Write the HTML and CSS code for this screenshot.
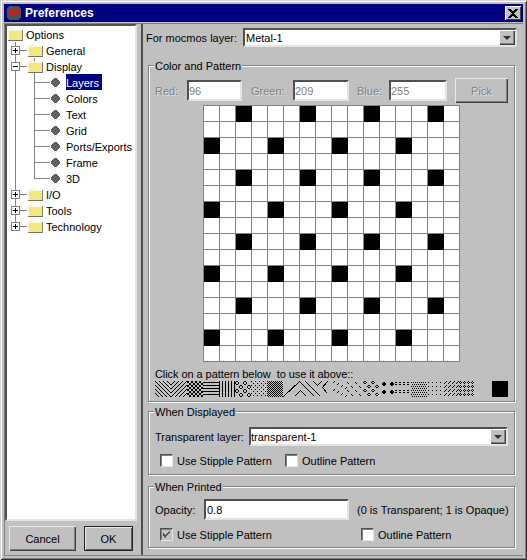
FILE: index.html
```html
<!DOCTYPE html>
<html lang="en">
<head>
<meta charset="utf-8">
<title>Preferences</title>
<link rel="stylesheet" href="styles.css">
</head>
<body>
<svg class="defs" width="0" height="0" aria-hidden="true">
  <symbol id="folder" viewBox="0 0 16 14">
    <path d="M1 2h1V1h5v1h1v1h7v10H1z" fill="#f4e87c"/>
    <path d="M1 3V2h1V1h5v1h1v1h7v1H2v9H1z" fill="#fbf8d8"/>
    <path d="M15 3h1v11H1v-1h14z" fill="#808080"/>
    <path d="M2 13h13v1H2z" fill="#707070"/>
  </symbol>
  <symbol id="ball" viewBox="0 0 9 9">
    <path d="M3 0h3v1h1v1h1v1h1v3H8v1H7v1H6v1H3V8H2V7H1V6H0V3h1V2h1V1h1z" fill="#606060"/>
  </symbol>
</svg>
<div class="window">
  <header class="titlebar">
    <svg class="appicon" width="14" height="14" viewBox="0 0 14 14" shape-rendering="crispEdges">
      <path d="M2 0h10v1h1v1h1v10h-1v1h-1v1H2v-1H1v-1H0V2h1V1h1z" fill="#505050"/>
      <path d="M2 3h4v4H2zM8 3h4v4H8zM5 7h4v3H5z" fill="#f01010"/>
    </svg>
    <span class="title-text">Preferences</span>
    <button class="closebtn" type="button" aria-label="Close">
      <svg width="10" height="9" viewBox="0 0 10 9" shape-rendering="crispEdges"><path d="M0 0h2.500l2.500 3 2.500-3H10L6.200 4.500 10 9H7.500L5 6 2.500 9H0l3.800-4.500z" fill="#000"/></svg>
    </button>
  </header>
  <div class="split">
    <aside class="leftpane">
      <div class="tree">
        <svg class="treelines" width="60" height="210" shape-rendering="crispEdges"><path d="M8.500 16V197M8.500 24.500H20M8.500 40.500H20M8.500 168.500H20M8.500 184.500H20M8.500 200.500H20M27.500 32V152.500M27.500 56.500H43M27.500 72.500H43M27.500 88.500H43M27.500 104.500H43M27.500 120.500H43M27.500 136.500H43M27.500 152.500H43" fill="none" stroke="#808080"/></svg>
        <div class="node"><svg class="folder"><use href="#folder"/></svg><span>Options</span></div>
        <div class="node l1"><span class="exp plus"></span><svg class="folder"><use href="#folder"/></svg><span>General</span></div>
        <div class="node l1"><span class="exp"></span><svg class="folder"><use href="#folder"/></svg><span>Display</span></div>
        <div class="node l2"><svg class="ball"><use href="#ball"/></svg><span class="sel">Layers</span></div>
        <div class="node l2"><svg class="ball"><use href="#ball"/></svg><span>Colors</span></div>
        <div class="node l2"><svg class="ball"><use href="#ball"/></svg><span>Text</span></div>
        <div class="node l2"><svg class="ball"><use href="#ball"/></svg><span>Grid</span></div>
        <div class="node l2"><svg class="ball"><use href="#ball"/></svg><span>Ports/Exports</span></div>
        <div class="node l2"><svg class="ball"><use href="#ball"/></svg><span>Frame</span></div>
        <div class="node l2"><svg class="ball"><use href="#ball"/></svg><span>3D</span></div>
        <div class="node l1"><span class="exp plus"></span><svg class="folder"><use href="#folder"/></svg><span>I/O</span></div>
        <div class="node l1"><span class="exp plus"></span><svg class="folder"><use href="#folder"/></svg><span>Tools</span></div>
        <div class="node l1"><span class="exp plus"></span><svg class="folder"><use href="#folder"/></svg><span>Technology</span></div>
      </div>
      <div class="actions">
        <button class="btn btn-cancel" type="button">Cancel</button>
        <button class="btn btn-ok" type="button">OK</button>
      </div>
    </aside>
    <main class="rightpane">
      <div class="layer-row">
        <span class="lbl lbl-layer">For mocmos layer:</span>
        <div class="combo combo-layer"><span class="combo-text">Metal-1</span><span class="combo-btn"><i class="arrow"></i></span></div>
      </div>

      <section class="group group-color">
        <h2 class="legend">Color and Pattern</h2>
        <div class="rgb-row">
          <span class="lbl dis lbl-red">Red:</span><span class="field f-red">96</span>
          <span class="lbl dis lbl-green">Green:</span><span class="field f-green">209</span>
          <span class="lbl dis lbl-blue">Blue:</span><span class="field f-blue">255</span>
          <button class="btn btn-pick" type="button">Pick</button>
        </div>
        <div class="pgrid">
          <i></i><i></i><i class="k"></i><i></i><i></i><i></i><i class="k"></i><i></i><i></i><i></i><i class="k"></i><i></i><i></i><i></i><i class="k"></i><i></i>
          <i></i><i></i><i></i><i></i><i></i><i></i><i></i><i></i><i></i><i></i><i></i><i></i><i></i><i></i><i></i><i></i>
          <i class="k"></i><i></i><i></i><i></i><i class="k"></i><i></i><i></i><i></i><i class="k"></i><i></i><i></i><i></i><i class="k"></i><i></i><i></i><i></i>
          <i></i><i></i><i></i><i></i><i></i><i></i><i></i><i></i><i></i><i></i><i></i><i></i><i></i><i></i><i></i><i></i>
          <i></i><i></i><i class="k"></i><i></i><i></i><i></i><i class="k"></i><i></i><i></i><i></i><i class="k"></i><i></i><i></i><i></i><i class="k"></i><i></i>
          <i></i><i></i><i></i><i></i><i></i><i></i><i></i><i></i><i></i><i></i><i></i><i></i><i></i><i></i><i></i><i></i>
          <i class="k"></i><i></i><i></i><i></i><i class="k"></i><i></i><i></i><i></i><i class="k"></i><i></i><i></i><i></i><i class="k"></i><i></i><i></i><i></i>
          <i></i><i></i><i></i><i></i><i></i><i></i><i></i><i></i><i></i><i></i><i></i><i></i><i></i><i></i><i></i><i></i>
          <i></i><i></i><i class="k"></i><i></i><i></i><i></i><i class="k"></i><i></i><i></i><i></i><i class="k"></i><i></i><i></i><i></i><i class="k"></i><i></i>
          <i></i><i></i><i></i><i></i><i></i><i></i><i></i><i></i><i></i><i></i><i></i><i></i><i></i><i></i><i></i><i></i>
          <i class="k"></i><i></i><i></i><i></i><i class="k"></i><i></i><i></i><i></i><i class="k"></i><i></i><i></i><i></i><i class="k"></i><i></i><i></i><i></i>
          <i></i><i></i><i></i><i></i><i></i><i></i><i></i><i></i><i></i><i></i><i></i><i></i><i></i><i></i><i></i><i></i>
          <i></i><i></i><i class="k"></i><i></i><i></i><i></i><i class="k"></i><i></i><i></i><i></i><i class="k"></i><i></i><i></i><i></i><i class="k"></i><i></i>
          <i></i><i></i><i></i><i></i><i></i><i></i><i></i><i></i><i></i><i></i><i></i><i></i><i></i><i></i><i></i><i></i>
          <i class="k"></i><i></i><i></i><i></i><i class="k"></i><i></i><i></i><i></i><i class="k"></i><i></i><i></i><i></i><i class="k"></i><i></i><i></i><i></i>
          <i></i><i></i><i></i><i></i><i></i><i></i><i></i><i></i><i></i><i></i><i></i><i></i><i></i><i></i><i></i><i></i>
        </div>
        <p class="hint">Click on a pattern below&nbsp; to use it above::</p>
        <div class="strip-row">
          <svg class="strip" width="320" height="16" viewBox="0 0 320 16" shape-rendering="crispEdges">
            <defs>
              <pattern id="p-back" width="4" height="4" patternUnits="userSpaceOnUse"><path d="M0 0h1v1H0zM1 1h1v1H1zM2 2h1v1H2zM3 3h1v1H3z"/></pattern>
              <pattern id="p-fwd" width="4" height="4" patternUnits="userSpaceOnUse"><path d="M3 0h1v1H3zM2 1h1v1H2zM1 2h1v1H1zM0 3h1v1H0z"/></pattern>
              <pattern id="p-check" width="4" height="4" patternUnits="userSpaceOnUse"><path d="M0 0h2v2H0zM2 2h2v2H2z"/></pattern>
              <pattern id="p-horiz" width="3" height="3" patternUnits="userSpaceOnUse"><path d="M0 1h3v1H0z"/></pattern>
              <pattern id="p-vert" width="3" height="3" patternUnits="userSpaceOnUse"><path d="M1 0h1v3H1z"/></pattern>
              <pattern id="p-rings" width="8" height="8" patternUnits="userSpaceOnUse"><path d="M1 0h2v1H1zM0 1h1v2H0zM3 1h1v2H3zM1 3h2v1H1zM5 4h2v1H5zM4 5h1v2H4zM7 5h1v2H7zM5 7h2v1H5z"/></pattern>
              <pattern id="p-sparse" width="4" height="4" patternUnits="userSpaceOnUse"><path d="M0 0h1v1H0zM2 2h1v1H2z"/></pattern>
              <pattern id="p-dense" width="2" height="2" patternUnits="userSpaceOnUse"><path d="M0 0h1v1H0zM1 1h1v1H1z"/></pattern>
              <pattern id="p-dash" width="16" height="8" patternUnits="userSpaceOnUse"><path d="M3 0h1v1H3zM2 1h1v1H2zM7 2h1v1H7zM6 3h1v1H6zM11 4h1v1h-1zM10 5h1v1h-1zM15 6h1v1h-1zM14 7h1v1h-1z"/></pattern>
              <pattern id="p-backdash" width="8" height="8" patternUnits="userSpaceOnUse"><path d="M0 1h1v1H0zM1 2h1v1H1zM4 5h1v1H4zM5 6h1v1H5z"/></pattern>
              <pattern id="p-diamond" width="8" height="8" patternUnits="userSpaceOnUse"><path d="M1 0h2v1H1zM0 1h1v1H0zM3 1h1v1H3zM1 2h2v1H1zM5 4h2v1H5zM4 5h1v1H4zM7 5h1v1H7zM5 6h2v1H5z"/></pattern>
              <pattern id="p-bigdot" width="8" height="8" patternUnits="userSpaceOnUse"><path d="M1 0h2v1h1v2H3v1H1V3H0V1h1z"/></pattern>
              <pattern id="p-bars" width="4" height="8" patternUnits="userSpaceOnUse"><path d="M0 1h2v1H0zM0 3h2v1H0z"/></pattern>
              <pattern id="p-fine" width="4" height="4" patternUnits="userSpaceOnUse"><path d="M0 1h1v1H0zM2 1h1v1H2zM1 3h1v1H1zM3 3h1v1H3z"/></pattern>
              <pattern id="p-grid" width="4" height="4" patternUnits="userSpaceOnUse"><path d="M1 1h1v1H1z"/></pattern>
              <pattern id="p-tick" width="4" height="4" patternUnits="userSpaceOnUse"><path d="M3 0h1v1H3zM2 1h1v1H2zM1 2h1v1H1z"/></pattern>
              <pattern id="p-blocks" width="4" height="4" patternUnits="userSpaceOnUse"><path d="M1 0h1v1H1zM0 1h1v1H0zM2 1h1v1H2zM1 2h1v1H1z"/></pattern>
            </defs>
            <rect x="0" width="16" height="16" fill="url(#p-back)"/>
            <rect x="16" width="16" height="16" fill="url(#p-fwd)"/>
            <rect x="32" width="16" height="16" fill="url(#p-check)"/>
            <rect x="48" width="16" height="16" fill="url(#p-horiz)"/>
            <rect x="64" width="16" height="16" fill="url(#p-vert)"/>
            <rect x="80" width="16" height="16" fill="url(#p-rings)"/>
            <rect x="96" width="16" height="16" fill="url(#p-sparse)"/>
            <rect x="112" width="16" height="16" fill="url(#p-dense)"/>
            <path d="M128.500 15.500L144.500 .5L159.500 15.500M139.500 15.500L145.500 9.500L151.500 15.500M150.500 .5L165.500 15.500M158.500 .5L162.500 4.500L166.500 .5M172.500 .5L167.500 6.500L172.500 12.500" fill="none" stroke="#000"/>
            <rect x="176" width="16" height="16" fill="url(#p-dash)"/>
            <rect x="192" width="16" height="16" fill="url(#p-backdash)"/>
            <rect x="208" width="16" height="16" fill="url(#p-diamond)"/>
            <rect x="224" y="0" width="16" height="16" fill="url(#p-bigdot)" transform="translate(3 1)"/>
            <rect x="240" width="16" height="16" fill="url(#p-bars)"/>
            <rect x="256" width="16" height="16" fill="url(#p-fine)"/>
            <rect x="272" width="16" height="16" fill="url(#p-grid)"/>
            <rect x="288" width="16" height="16" fill="url(#p-tick)"/>
            <rect x="304" width="16" height="16" fill="url(#p-blocks)"/>
          </svg>
          <span class="swatch"></span>
        </div>
      </section>

      <section class="group group-displayed">
        <h2 class="legend">When Displayed</h2>
        <div class="inline-row">
          <span class="lbl lbl-trans">Transparent layer:</span>
          <div class="combo combo-trans"><span class="combo-text flush">transparent-1</span><span class="combo-btn"><i class="arrow"></i></span></div>
        </div>
        <div class="check-row">
          <label class="check w-disp"><span class="box"></span>Use Stipple Pattern</label>
          <label class="check"><span class="box"></span>Outline Pattern</label>
        </div>
      </section>

      <section class="group group-printed">
        <h2 class="legend">When Printed</h2>
        <div class="inline-row">
          <span class="lbl lbl-op">Opacity:</span>
          <span class="field f-op">0.8</span>
          <span class="lbl op-note">(0 is Transparent; 1 is Opaque)</span>
        </div>
        <div class="check-row">
          <label class="check w-print"><span class="box on"><svg width="9" height="9" viewBox="0 0 9 9" shape-rendering="crispEdges"><path d="M8 1v2H7v1H6v1H5v1H4v2H3V7H2V6H1V3h1v1h1v1h1V4h1V3h1V2h1V1z" fill="#505050"/></svg></span>Use Stipple Pattern</label>
          <label class="check"><span class="box"></span>Outline Pattern</label>
        </div>
      </section>
    </main>
  </div>
</div>
</body>
</html>
```
FILE: styles.css
```css
* { box-sizing: border-box; }
html, body { margin: 0; padding: 0; }
body {
  width: 527px;
  height: 560px;
  overflow: hidden;
  background: #c0c0c0;
  font: 11px/13px "Liberation Sans", Arial, sans-serif;
  color: #000;
}
.defs { position: absolute; }

.window {
  width: 527px;
  height: 560px;
  padding: 4px;
  display: flex;
  flex-direction: column;
  background: #c0c0c0;
  box-shadow: inset 1px 1px 0 #d4d4d4, inset -1px -1px 0 #303030, inset 2px 2px 0 #fff, inset -2px -2px 0 #808080;
}

/* Title bar */
.titlebar {
  height: 18px;
  margin-bottom: 1px;
  padding: 0 2px 0 3px;
  flex: none;
  display: flex;
  align-items: center;
  background: #000080;
  color: #fff;
}
.appicon { flex: none; }
.title-text { margin-left: 4px; font-size: 12px; font-weight: 700; }
.closebtn {
  margin-left: auto;
  width: 16px;
  height: 14px;
  padding: 0;
  display: flex;
  align-items: center;
  justify-content: center;
  border: 0;
  background: #c0c0c0;
  box-shadow: inset 1px 1px 0 #fff, inset -1px -1px 0 #404040;
}

/* Split pane */
.split {
  flex: 1;
  min-height: 0;
  display: flex;
  border-top: 1px solid #808080;
  border-left: 1px solid #808080;
  border-bottom: 1px solid #808080;
}
.leftpane { width: 136px; flex: none; display: flex; flex-direction: column; }

/* Tree */
.tree {
  position: relative;
  width: 132px;
  height: 497px;
  background: #fff;
  border: 2px solid;
  border-color: #505050 #e4e4e4 #e4e4e4 #505050;
}
.treelines { position: absolute; left: 0; top: 0; }
.node {
  position: relative;
  height: 16px;
  display: flex;
  align-items: center;
  white-space: nowrap;
}
.node > span { height: 16px; line-height: 18px; }
.node.l1 { padding-left: 4px; }
.node.l2 { padding-left: 44px; }
.folder { width: 16px; height: 14px; flex: none; margin-right: 3px; }
.ball { width: 9px; height: 9px; flex: none; margin-right: 6px; }
.node > .exp {
  position: relative;
  width: 9px;
  height: 9px;
  flex: none;
  margin-right: 7px;
  background: #fff;
  border: 1px solid #808080;
}
.exp::before {
  content: "";
  position: absolute;
  left: 1px;
  top: 3px;
  width: 5px;
  height: 1px;
  background: #000;
}
.exp.plus::after {
  content: "";
  position: absolute;
  left: 3px;
  top: 1px;
  width: 1px;
  height: 5px;
  background: #000;
}
.node > .sel { background: #000080; color: #fff; padding-right: 3px; }

/* Bottom buttons */
.actions { display: flex; padding: 5px 0 0 4px; gap: 8px; }
.btn {
  height: 25px;
  padding: 2px 0 0;
  border: 0;
  font: inherit;
  color: #000;
  background: #c0c0c0;
  box-shadow: inset 1px 1px 0 #e8e8e8, inset -1px -1px 0 #404040, inset -2px -2px 0 #808080;
}
.btn-cancel { width: 67px; }
.btn-ok {
  width: 49px;
  box-shadow: inset 0 0 0 1px #202020, inset 2px 2px 0 #e8e8e8, inset -2px -2px 0 #606060;
}

/* Right pane */
.rightpane {
  flex: 1;
  padding: 4px 6px 0 3px;
  border-left: 2px solid #505050;
}
.layer-row { display: flex; align-items: center; }
.lbl { flex: none; padding-top: 2px; }
.lbl-layer { width: 97px; }
.combo {
  display: flex;
  height: 19px;
  background: #fff;
  border: 2px solid;
  border-color: #505050 #e4e4e4 #e4e4e4 #505050;
}
.combo-layer { width: 274px; }
.combo-trans { width: 259px; }
.combo-text { flex: 1; padding-left: 1px; line-height: 17px; }
.combo-text.flush { padding-left: 0; }
.combo-btn {
  width: 16px;
  flex: none;
  display: flex;
  align-items: center;
  justify-content: center;
  background: #c0c0c0;
  box-shadow: inset 1px 1px 0 #fff, inset -1px -1px 0 #404040, inset -2px -2px 0 #808080;
}
.arrow {
  width: 0;
  height: 0;
  border-left: 4px solid transparent;
  border-right: 4px solid transparent;
  border-top: 4px solid #303030;
}

/* Etched groups */
.group {
  position: relative;
  margin-left: 2px;
  width: 367px;
  padding: 0 0 0 6px;
  border: 1px solid #808080;
  box-shadow: 1px 1px 0 #fff, inset 1px 1px 0 #fff;
}
.legend {
  position: absolute;
  left: 5px;
  top: -6px;
  margin: 0;
  padding: 0 1px;
  font: inherit;
  background: #c0c0c0;
}
.group-color { height: 337px; margin-top: 18px; padding-top: 12px; }
.group-displayed { height: 64px; margin-top: 9px; padding-top: 15px; }
.group-printed { height: 62px; margin-top: 11px; padding-top: 12px; }

/* RGB row */
.rgb-row { display: flex; align-items: center; height: 25px; }
.dis { color: #808080; text-shadow: 1px 1px 0 #e0e0e0; }
.lbl-red { width: 32px; }
.lbl-green { width: 42px; margin-left: 9px; }
.lbl-blue { width: 32px; margin-left: 8px; }
.field {
  display: block;
  height: 21px;
  flex: none;
  line-height: 19px;
  background: #fff;
  border: 2px solid;
  border-color: #505050 #e4e4e4 #e4e4e4 #505050;
}
.f-red, .f-green, .f-blue { color: #808080; }
.f-red { width: 55px; }
.f-green { width: 56px; }
.f-blue { width: 58px; }
.btn-pick {
  width: 53px;
  margin-left: 8px;
  color: #808080;
  text-shadow: 1px 1px 0 #e0e0e0;
}

/* Pattern editor */
.pgrid {
  display: grid;
  grid-template-columns: repeat(16, 16px);
  grid-auto-rows: 16px;
  width: 257px;
  margin: 2px 0 0 48px;
  border-left: 1px solid #808080;
  border-top: 1px solid #808080;
}
.pgrid i {
  display: block;
  background: #fff;
  border-right: 1px solid #808080;
  border-bottom: 1px solid #808080;
}
.pgrid i.k { background: #000; border: 0; }
.hint { margin: 6px 0 0; height: 13px; white-space: nowrap; letter-spacing: -0.07px; }
.strip-row { display: flex; }
.strip { display: block; flex: none; }
.swatch { width: 16px; height: 16px; margin-left: 17px; background: #000; }

/* Lower groups */
.inline-row { display: flex; align-items: center; }
.lbl-trans { width: 94px; }
.lbl-op { width: 49px; }
.f-op { width: 145px; padding-left: 1px; }
.op-note { margin-left: 8px; white-space: nowrap; }
.check-row { display: flex; margin-top: 8px; padding-left: 5px; }
.check { display: flex; align-items: flex-start; height: 13px; line-height: 15px; white-space: nowrap; }
.w-disp { width: 125px; }
.w-print { width: 201px; }
.box {
  width: 13px;
  height: 13px;
  margin-right: 4px;
  flex: none;
  display: flex;
  align-items: center;
  justify-content: center;
  background: #fff;
  border: 1px solid;
  border-color: #505050 #e4e4e4 #e4e4e4 #505050;
  box-shadow: inset 1px 1px 0 #808080;
}
.box.on { background: #c0c0c0; }
```
